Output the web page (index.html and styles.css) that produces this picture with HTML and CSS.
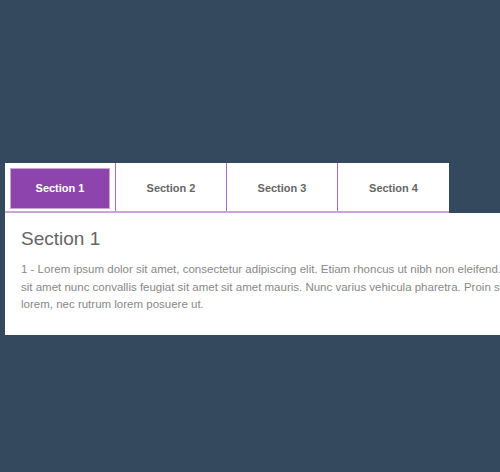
FILE: index.html
```html
<!DOCTYPE html>
<html lang="en">

<head>
    <meta charset="UTF-8">
    <meta name="viewport" content="width=device-width, initial-scale=1.0">
    <title>Tabs</title>
    <link rel="stylesheet" href="styles.css">
</head>

<body>
    <div class="tabs">
        <ul class="tab-list">
            <li class="tab active"><a href="#section-1">Section 1</a></li>
            <li class="tab"><a href="#section-2">Section 2</a></li>
            <li class="tab"><a href="#section-3">Section 3</a></li>
            <li class="tab"><a href="#section-4">Section 4</a></li>
        </ul>

        <div class="tab-panel" id="section-1">
            <h3>Section 1</h3>
            <p>1 - Lorem ipsum dolor sit amet, consectetur adipiscing elit. Etiam rhoncus ut nibh non eleifend. Nullam
                sit amet nunc convallis feugiat sit amet sit amet mauris. Nunc varius vehicula pharetra. Proin sodales
                lorem, nec rutrum lorem posuere ut.</p>
        </div>
    </div>
</body>

</html>
```

FILE: styles.css
```css
html {
    overflow: hidden;
}

body {
    margin: 0;
    background-color: #34495e;
    font-family: 'Liberation Sans', Arial, sans-serif;
}

.tabs {
    width: 557px;
    margin: 163px 0 0 5px;
}

.tab-list {
    display: flex;
    width: 444px;
    margin: 0;
    padding: 0;
    list-style: none;
    background-color: #fff;
    border-bottom: 2px solid #c9a3da;
}

.tab {
    flex: none;
    width: 111px;
    padding: 5px 5px 2px 5px;
    box-sizing: border-box;
    border-right: 1px solid #a66bc2;
}

.tab:last-child {
    border-right: none;
}

.tab a {
    display: flex;
    align-items: center;
    justify-content: center;
    height: 41px;
    padding-bottom: 1px;
    box-sizing: border-box;
    color: #666;
    font-size: 11px;
    font-weight: bold;
    text-decoration: none;
}

.tab.active a {
    background-color: #8e44ad;
    border: 1px solid #c7a6d6;
    color: #fff;
}

.tab-panel {
    background-color: #fff;
    padding: 15px 16px 21px 16px;
    height: 86px;
}

.tab-panel h3 {
    margin: 0 0 11px 0;
    font-size: 19px;
    font-weight: normal;
    color: #666;
}

.tab-panel p {
    margin: 0;
    font-size: 11.5px;
    line-height: 17.5px;
    color: #888;
}
```
